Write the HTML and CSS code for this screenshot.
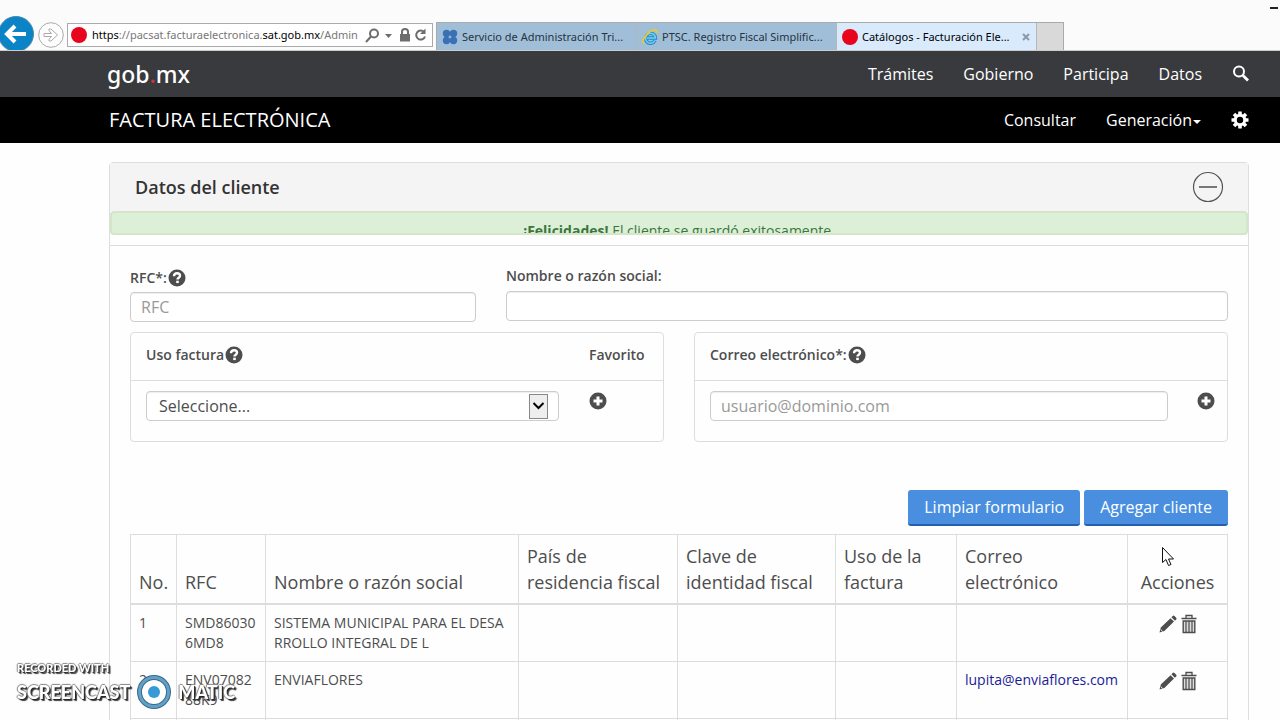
FILE: index.html
```html
<!DOCTYPE html>
<html lang="es">
<head>
<meta charset="utf-8">
<title>Catálogos - Facturación Electrónica</title>
<link rel="stylesheet" href="styles.css">
</head>
<body>
<svg class="sprite" aria-hidden="true">
  <symbol id="help" viewBox="0 0 18 18"><circle cx="9" cy="9" r="8.5" fill="#4d4d4d"/><path d="M6 7.2C6 5.2 7.3 4.3 9 4.3s3 .9 3 2.500c0 1.900-2.500 1.900-2.500 3.700" fill="none" stroke="#fff" stroke-width="2.400"/><rect x="8.200" y="11.700" width="2.600" height="2.400" fill="#fff"/></symbol>
  <symbol id="plus" viewBox="0 0 18 18"><circle cx="9" cy="9" r="8.500" fill="#4d4d4d"/><path d="M9 4.500v9M4.500 9h9" stroke="#fff" stroke-width="3"/></symbol>
  <symbol id="pencil" viewBox="0 0 18 18"><path d="M.5 17.500l1.300-5L11.500 3.200l3.500 3.400-9.600 9.500zM12.400 2.300l1.300-1.300q.9-.8 1.800 0l1.700 1.700q.8.900 0 1.800l-1.300 1.300z" fill="#4d4d4d"/><path d="M1.700 14.500l1.900 1.900" stroke="#fff" stroke-width="1"/></symbol>
  <symbol id="trash" viewBox="0 0 16 20"><path d="M.5 4.500h15M5 4V1.500h6V4" fill="none" stroke="#4d4d4d" stroke-width="1.300"/><path d="M2.200 7h11.600v11.500H2.200z" fill="#ddd" stroke="#4d4d4d" stroke-width="1.400"/><path d="M5 7v11M8 7v11M11 7v11" stroke="#4d4d4d" stroke-width="1.200"/></symbol>
</svg>

<header class="browser">
  <button class="back" aria-label="Atrás"><svg viewBox="0 0 36 36"><circle cx="18" cy="18" r="17.500" fill="#0a84c6" stroke="#4c87a9"/><path d="M28 18H10M17 10l-8 8 8 8" fill="none" stroke="#fff" stroke-width="4"/></svg></button>
  <button class="forward" aria-label="Adelante"><svg viewBox="0 0 26 26"><circle cx="13" cy="13" r="12.300" fill="#fdfdfd" stroke="#aaa"/><path d="M6 11.500h7.500L11 8.500V7h2l6.500 6-6.500 6h-2v-1.500l2.500-3H6z" fill="#fff" stroke="#aaa"/></svg></button>
  <div class="address">
    <span class="dot"></span>
    <span class="url"><b>https</b>://pacsat.facturaelectronica.<b>sat.gob.mx</b>/Admin</span>
    <svg class="address-tools" viewBox="0 0 64 18" fill="none" stroke="#6d6d6d" stroke-width="2"><circle cx="10" cy="7.500" r="4"/><path d="M7 10.500L2 16"/><path d="M21 8h7l-3.500 4z" fill="#6d6d6d" stroke="none"/><path d="M36 8h10v7.500H36z" fill="#6d6d6d" stroke="none"/><path d="M38 8V5.500q0-2.500 3-2.500t3 2.500V8"/><path d="M60 6A4.500 4.500 0 1 0 61 10.500"/><path d="M61.500 2.500V8H56z" fill="#6d6d6d" stroke="none"/></svg>
  </div>
  <div class="tabs">
    <div class="tab"><svg class="fav" viewBox="0 0 16 16" fill="#3a71b5"><circle cx="4.500" cy="4.500" r="3.700"/><circle cx="11.500" cy="4.500" r="3.700"/><circle cx="4.500" cy="11.500" r="3.700"/><circle cx="11.500" cy="11.500" r="3.700"/></svg><span class="tab-name">Servicio de Administración Tri...</span></div>
    <div class="tab"><svg class="fav" viewBox="0 0 16 16" fill="none"><path d="M13 11.500A5 5 0 1 1 13.500 9H5" stroke="#238bc7" stroke-width="3.400"/><path d="M13 11.500A5 5 0 1 1 13.500 9H5" stroke="#6fd0f4" stroke-width="1.600"/><path d="M2 14.500C-.5 12.500 3 5 8.500 2.300 12 .6 15.500.5 14.800 4" stroke="#efc631" stroke-width="1.800"/></svg><span class="tab-name">PTSC. Registro Fiscal Simplific...</span></div>
    <div class="tab active"><span class="dot"></span><span class="tab-name">Catálogos - Facturación Ele...</span><button class="close" aria-label="Cerrar pestaña"><svg viewBox="0 0 8 8"><path d="M1 1l6 6M7 1L1 7" stroke="#899aa9" stroke-width="2"/></svg></button></div>
    <button class="new-tab" aria-label="Nueva pestaña"></button>
  </div>
  <button class="minimize" aria-label="Minimizar"></button>
</header>

<nav class="bar gov">
  <a class="logo" href="#">gob<i>.</i>mx</a>
  <div class="links"><a href="#">Trámites</a><a href="#">Gobierno</a><a href="#">Participa</a><a href="#">Datos</a><a href="#" aria-label="Buscar"><svg class="nav-icon" viewBox="0 0 18 18" fill="none" stroke="#fff"><circle cx="7" cy="6.500" r="5" stroke-width="2"/><path d="M11 10.500l5 5" stroke-width="2.800"/></svg></a></div>
</nav>
<nav class="bar service">
  <a class="service-name" href="#">FACTURA ELECTRÓNICA</a>
  <div class="links"><a href="#">Consultar</a><a class="menu" href="#">Generación<span class="caret"></span></a><a href="#" aria-label="Configuración"><svg class="nav-icon" viewBox="0 0 18 18"><path d="M9 .5v17M.5 9h17M3 3l12 12M15 3L3 15" stroke="#fff" stroke-width="3.600"/><circle cx="9" cy="9" r="4.700" fill="#000" stroke="#fff" stroke-width="3"/></svg></a></div>
</nav>

<main>
  <section class="panel">
    <div class="panel-head"><h1>Datos del cliente</h1><button class="collapse" aria-label="Contraer"><svg viewBox="0 0 32 32"><circle cx="16" cy="16" r="14.500" fill="none" stroke="#555" stroke-width="1.200"/><path d="M7 16h18" stroke="#777" stroke-width="2"/></svg></button></div>
    <div class="notice"><div class="alert" role="status"><strong>¡Felicidades!</strong> El cliente se guardó exitosamente.</div></div>
    <form class="panel-body">
      <div class="row names">
        <div class="field"><label class="helped" for="rfc">RFC*:<svg class="round"><use href="#help"/></svg></label><input id="rfc" type="text" placeholder="RFC"></div>
        <div class="field"><label for="nombre">Nombre o razón social:</label><input id="nombre" type="text"></div>
      </div>
      <div class="row halves">
        <div class="well">
          <div class="well-head use"><label for="uso">Uso factura<svg class="round"><use href="#help"/></svg></label><span>Favorito</span></div>
          <div class="well-body use"><div class="select"><select id="uso"><option>Seleccione...</option></select><svg class="arrow" viewBox="0 0 19 25"><rect x=".5" y=".5" width="18" height="24" fill="#eee" stroke="#888"/><path d="M4.500 9l5 5 5-5" fill="none" stroke="#000" stroke-width="2"/></svg></div><button type="button" class="add" aria-label="Agregar uso"><svg class="round"><use href="#plus"/></svg></button></div>
        </div>
        <div class="well">
          <div class="well-head"><label for="correo">Correo electrónico*:<svg class="round"><use href="#help"/></svg></label></div>
          <div class="well-body mail"><input id="correo" type="email" placeholder="usuario@dominio.com"><button type="button" class="add" aria-label="Agregar correo"><svg class="round"><use href="#plus"/></svg></button></div>
        </div>
      </div>
      <div class="actions"><button type="button" class="primary">Limpiar formulario</button><button type="button" class="primary">Agregar cliente</button></div>
      <table>
        <colgroup><col class="c-no"><col class="c-rfc"><col class="c-name"><col class="c-country"><col class="c-key"><col class="c-use"><col class="c-mail"><col class="c-act"></colgroup>
        <thead><tr><th>No.</th><th>RFC</th><th>Nombre o razón social</th><th>País de residencia fiscal</th><th>Clave de identidad fiscal</th><th>Uso de la factura</th><th>Correo<br>electrónico</th><th class="center">Acciones</th></tr></thead>
        <tbody>
          <tr><td>1</td><td>SMD860306MD8</td><td>SISTEMA MUNICIPAL PARA EL DESARROLLO INTEGRAL DE L</td><td></td><td></td><td></td><td></td><td class="center"><button type="button" class="tool" aria-label="Editar"><svg class="pencil"><use href="#pencil"/></svg></button><button type="button" class="tool" aria-label="Eliminar"><svg class="trash"><use href="#trash"/></svg></button></td></tr>
          <tr><td>2</td><td>ENV0708288K9</td><td>ENVIAFLORES</td><td></td><td></td><td></td><td><a href="#">lupita@enviaflores.com</a></td><td class="center"><button type="button" class="tool" aria-label="Editar"><svg class="pencil"><use href="#pencil"/></svg></button><button type="button" class="tool" aria-label="Eliminar"><svg class="trash"><use href="#trash"/></svg></button></td></tr>
          <tr><td></td><td></td><td></td><td></td><td></td><td></td><td></td><td></td></tr>
        </tbody>
      </table>
    </form>
  </section>
</main>

<div class="watermark"><div class="recorded">RECORDED WITH</div><div class="brand"><span>SCREENCAST</span><svg viewBox="0 0 36 36"><circle cx="18" cy="18" r="14.500" fill="#fff" stroke="#356b8e" stroke-width="5"/><circle cx="18" cy="18" r="14.500" fill="none" stroke="#659fc5" stroke-width="3"/><circle cx="18" cy="18" r="6" fill="#3799d6"/></svg><span>MATIC</span></div></div>
<svg class="cursor" viewBox="0 0 12 19"><path d="M.5.5v15l3.500-3 2.500 6 2.500-1-2.500-5.500h5z" fill="#fff" stroke="#111"/></svg>
</body>
</html>
```
FILE: styles.css
```css
* { box-sizing: border-box; }
body { margin: 0; height: 100vh; display: flex; flex-direction: column; overflow: hidden; background: #fefefe; color: #4d4d4d; font: 14px/20px "Open Sans", "Noto Sans", sans-serif; }
button { padding: 0; border: 0; background: none; font: inherit; color: inherit; }
a { color: inherit; text-decoration: none; }
svg { display: block; flex: none; }
.sprite { width: 0; height: 0; position: absolute; }

.browser { flex: none; height: 51px; display: flex; align-items: flex-end; background: #fbfbfb; border-bottom: 1px solid #ccc; font: 12px/16px "Noto Sans", sans-serif; overflow: hidden; }
.back { width: 36px; height: 34px; margin-left: -2px; overflow: hidden; }
.back svg { width: 36px; height: 36px; }
.forward { margin: 0 4px 2px; }
.forward svg { width: 26px; height: 26px; }
.address { width: 366px; height: 24px; margin: 0 3px 3px -1px; padding: 0 4px 0 3px; border: 1px solid #aaa; background: #fff; display: flex; align-items: center; }
.dot { flex: none; width: 16px; height: 16px; border-radius: 50%; background: #e9041e; }
.url { flex: 1; margin: 0 4px 0 5px; overflow: hidden; white-space: nowrap; color: #777; font-size: 11px; }
.url b { font-weight: 400; color: #000; }
.address-tools { width: 64px; height: 18px; }
.tabs { display: flex; height: 28px; border: 1px solid #aaa; border-bottom: 0; }
.tab { width: 200px; padding: 0 6px 0 5px; display: flex; align-items: center; gap: 4px; background: #a1bed8; border-right: 1px solid #b3b7b8; color: #25343f; font-size: 11px; white-space: nowrap; }
.tab.active { background: #d8eafb; color: #000; }
.tab-name { flex: 1; }
.fav { width: 16px; height: 16px; }
.close svg { width: 8px; height: 8px; }
.new-tab { width: 26px; background: #d9d9d9; }
.minimize { align-self: flex-start; width: 8px; height: 2px; margin: 7px 2px 0 auto; background: #222; }

.bar { flex: none; height: 46px; padding: 0 31px 0 109px; display: flex; align-items: center; justify-content: space-between; background: #393a3d; color: #fff; font-size: 16px; }
.gov { padding: 0 30px 0 107px; }
.service { background: #000; }
.logo { font: 500 23px/30px "Noto Sans", sans-serif; }
.logo i { color: #d0352f; font-style: normal; }
.service-name { font-size: 20px; }
.links { display: flex; align-items: center; gap: 30px; }
.nav-icon { width: 18px; height: 18px; }
.menu { display: flex; align-items: center; gap: 1px; }
.caret { border: 4px solid transparent; border-top-color: #fff; border-bottom: 0; margin-top: 4px; }

main { flex: 1; min-height: 0; overflow: hidden; padding: 19px 31px 0 109px; }
.panel { border: 1px solid #ddd; border-radius: 4px 4px 0 0; }
.panel-head { height: 48px; padding: 0 24px 0 25px; display: flex; align-items: center; justify-content: space-between; background: #f4f4f4; }
h1 { margin: 0; font-size: 18px; line-height: 24px; font-weight: 600; color: #333; }
.collapse svg { width: 32px; height: 32px; }
.notice { height: 35px; border-bottom: 1px solid #ddd; }
.alert { height: 24px; padding-top: 8px; overflow: hidden; text-align: center; background: #dcefd7; border: 2px solid #d5e5c8; border-radius: 4px; color: #3c763d; }
.panel-body { padding: 20px; }
.row { display: grid; column-gap: 30px; }
.names { grid-template-columns: 346fr 722fr; align-items: start; min-height: 56px; }
.halves { grid-template-columns: 1fr 1fr; margin-top: 10px; }
label, .well-head { display: flex; align-items: center; font-weight: 600; color: #4d4d4d; }
.field label { margin-bottom: 5px; }
.field .helped { margin-bottom: 4px; padding-top: 2px; }
.round { width: 18px; height: 18px; }
label .round { margin-left: 1px; }
input, select { display: block; width: 100%; height: 30px; padding: 0 10px; border: 1px solid #ccc; border-radius: 4px; background: #fff; box-shadow: inset 0 1px 1px #eee; font: 16px/22px "Open Sans", "Noto Sans", sans-serif; color: #4d4d4d; }
input::placeholder { color: #999; opacity: 1; }
select { appearance: none; padding-left: 12px; }
.well { border: 1px solid #ddd; border-radius: 4px; }
.well-head { height: 48px; padding: 0 15px 4px; border-bottom: 1px solid #ddd; }
.well-body { height: 60px; padding: 10px 15px; align-items: start; }
.use { display: grid; grid-template-columns: 1fr 60px; column-gap: 30px; padding-right: 14px; }
.mail { display: grid; grid-template-columns: 1fr 18px; column-gap: 29px; padding-right: 12px; }
.add { width: 18px; margin-top: 1px; }
.select { position: relative; }
.arrow { position: absolute; right: 11px; top: 3px; width: 19px; height: 25px; pointer-events: none; }
.actions { display: flex; justify-content: flex-end; gap: 4px; margin: 48px 0 8px; }
.primary { height: 36px; padding: 0 16px; border-radius: 3px; border-bottom: 2px solid #245fae; background: #4a8fdf; color: #fff; font-size: 16px; }
table { width: 100%; table-layout: fixed; border-collapse: collapse; }
th, td { border: 1px solid #ddd; padding: 8px; text-align: left; }
th { vertical-align: bottom; font-size: 18px; line-height: 26px; font-weight: 400; border-bottom-width: 2px; }
td { vertical-align: top; height: 57px; word-break: break-all; }
td a { color: #1a1a99; white-space: nowrap; }
.center { text-align: center; }
.c-no { width: 46px; } .c-rfc { width: 89px; } .c-name { width: 253px; } .c-country { width: 159px; }
.c-key { width: 158px; } .c-use { width: 121px; } .c-mail { width: 171px; } .c-act { width: 100px; }
.tool { margin: 1px 2px 0; vertical-align: top; }
.pencil { width: 18px; height: 20px; }
.trash { width: 16px; height: 20px; }

.watermark { position: fixed; left: 17px; bottom: 10px; color: #fff; font-family: Lato, sans-serif; font-weight: 900; text-shadow: 1px 1px 1px #222, -1px 0 1px #888, 0 -1px 1px #888, 2px 2px 1px #444; }
.recorded { font-size: 11px; line-height: 12px; }
.brand { display: flex; align-items: center; gap: 6px; font-size: 18px; line-height: 22px; }
.brand svg { width: 36px; height: 36px; }
.cursor { position: fixed; left: 1162px; top: 547px; width: 12px; height: 19px; }
```
